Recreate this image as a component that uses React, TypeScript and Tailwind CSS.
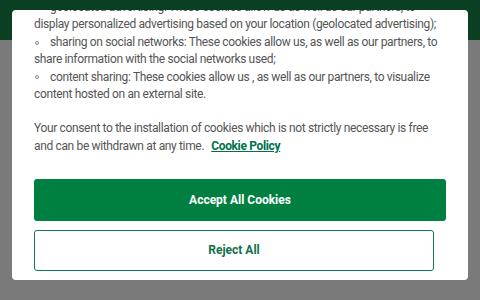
import React from "react";

const font = { fontFamily: '"Roboto", "Liberation Sans", sans-serif' };

function Bullet({ children }: { children: React.ReactNode }) {
  return (
    <li className="flex items-center whitespace-nowrap">
      <span className="w-[16px] shrink-0 flex items-center pl-[1px]">
        <span className="block w-[4px] h-[4px] rounded-full border border-[#888888]" />
      </span>
      <span>{children}</span>
    </li>
  );
}

export default function App() {
  return (
    <div className="relative w-[480px] h-[300px] overflow-hidden bg-[#7a7a7a]" style={font}>
      <div className="h-[40px] bg-[#0a3f24]" />
      <div className="absolute left-[12px] top-[10px] w-[456px] h-[270px] bg-white rounded-[4px] overflow-hidden flex flex-col">
        <div className="flex-1 overflow-hidden px-[22px]">
          <div className="-mt-[11px] text-[12px] leading-[17.4px] text-[#555555] tracking-[-0.35px]">
            <ul>
              <Bullet>geolocated advertising: These cookies allow us as well as our partners, to</Bullet>
              <li className="whitespace-nowrap">display personalized advertising based on your location (geolocated advertising);</li>
              <Bullet>sharing on social networks: These cookies allow us, as well as our partners, to</Bullet>
              <li className="whitespace-nowrap">share information with the social networks used;</li>
              <Bullet>content sharing: These cookies allow us , as well as our partners, to visualize</Bullet>
              <li className="whitespace-nowrap">content hosted on an external site.</li>
            </ul>
            <p className="mt-[17px]">
              <span className="block whitespace-nowrap">Your consent to the installation of cookies which is not strictly necessary is free</span>
              <span className="block whitespace-nowrap">
                and can be withdrawn at any time.
                <a className="ml-[7px] font-bold text-[#00704a] underline">Cookie Policy</a>
              </span>
            </p>
            <div className="mt-[24px] flex flex-col gap-[9px] tracking-normal">
              <button className="w-[412px] h-[42px] rounded-[3px] bg-[#008040] text-white font-bold text-[12px]">Accept All Cookies</button>
              <button className="w-[400px] h-[41px] rounded-[3px] border border-[#0f7a52] bg-white text-[#12704a] font-bold text-[12px]">Reject All</button>
            </div>
          </div>
        </div>
      </div>
    </div>
  );
}
